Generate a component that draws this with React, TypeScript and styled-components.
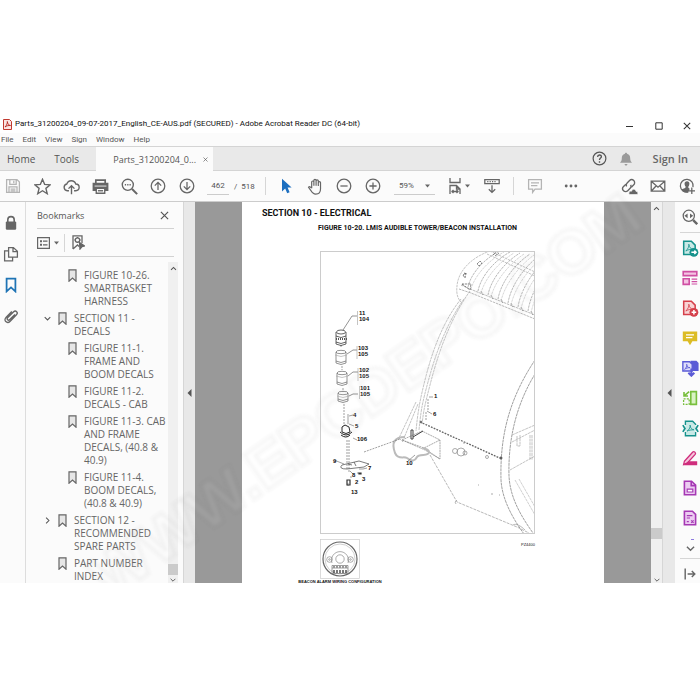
import React from "react";
import styled, { createGlobalStyle } from "styled-components";

const Global = createGlobalStyle`
  * { box-sizing: border-box; }
  body { margin: 0; background: #fff; font-family: "Open Sans", "Noto Sans", sans-serif; color: #555; }
  button, input, select { font: inherit; color: inherit; }
`;

const smallFont = `Roboto, "Liberation Sans", sans-serif`;

const Window = styled.main`
  position: relative;
  display: flex;
  flex-direction: column;
  height: calc(100vh - 232px);
  min-height: 360px;
  margin: 115px 0 117px;
  overflow: hidden;
  background: #fbfbfb;
`;

const TitleBar = styled.header`
  display: flex;
  align-items: center;
  height: 18px;
  padding-left: 3px;
  gap: 3px;
  background: #fff;
`;
const Title = styled.h1`
  flex: 1;
  margin: 0;
  font-family: ${smallFont};
  font-size: 8px;
  line-height: 16px;
  font-weight: 400;
  color: #111;
  white-space: nowrap;
`;
const PlainButton = styled.button`
  display: inline-flex;
  align-items: center;
  justify-content: center;
  padding: 0;
  border: 0;
  background: none;
  flex: none;
`;
const WindowButton = styled(PlainButton)`
  width: 30px;
  height: 16px;
  color: #333;
  &:last-child { width: 26px; }
`;

const MenuBar = styled.nav`
  display: flex;
  align-items: center;
  height: 13px;
  padding-left: 1px;
  gap: 9px;
  font-family: ${smallFont};
  font-size: 8px;
`;
const MenuItem = styled(PlainButton)`
  line-height: 13px;
`;

const TabBar = styled.nav`
  display: flex;
  align-items: stretch;
  height: 25px;
  border-top: 1px solid #d4d4d4;
  border-bottom: 1px solid #d4d4d4;
  background: #e9e9e9;
  font-size: 10px;
`;
const Tab = styled(PlainButton)<{ $wide?: boolean }>`
  padding-left: ${(p) => (p.$wide ? 19 : 7)}px;
`;
const DocumentTab = styled.div`
  display: flex;
  align-items: center;
  justify-content: flex-end;
  gap: 7px;
  width: 117px;
  margin: 0 auto -1px 17px;
  padding-right: 5px;
  background: #fbfbfb;
  font-size: 9px;
`;
const Account = styled.div`
  display: flex;
  align-items: center;
  gap: 12px;
  padding-right: 12px;
`;
const SignIn = styled(PlainButton)`
  margin-left: 8px;
  font-size: 11px;
  font-weight: 600;
  color: #666;
`;

const ToolBar = styled.div`
  display: flex;
  align-items: center;
  flex: none;
  height: 31px;
  border-bottom: 1px solid #ccc;
  font-family: ${smallFont};
  font-size: 8px;
`;
const ToolGroup = styled.div<{ $end?: boolean; $gap?: number }>`
  display: flex;
  align-items: center;
  gap: ${(p) => p.$gap ?? 3}px;
  flex: none;
  margin-left: ${(p) => (p.$end ? "auto" : "0")};
`;
const Tool = styled(PlainButton)<{ $faint?: boolean }>`
  width: 26px;
  height: 28px;
  color: ${(p) => (p.$faint ? "#b4b4b4" : "#666")};
`;
const Rule = styled.span<{ $left: number; $right: number }>`
  width: 1px;
  height: 18px;
  flex: none;
  margin: 0 ${(p) => p.$right}px 0 ${(p) => p.$left}px;
  background: #d6d6d6;
`;
const PageField = styled.label`
  display: flex;
  align-items: center;
  gap: 5px;
  width: 46px;
  margin-left: 7px;
  white-space: pre;
`;
const PageInput = styled.input`
  width: 22px;
  height: 18px;
  padding: 0;
  border: 0;
  border-bottom: 1px solid #ccc;
  background: none;
  text-align: center;
`;
const ZoomField = styled.label`
  display: flex;
  align-items: center;
  width: 41px;
  height: 18px;
  margin: 0 11px 0 8px;
  padding-right: 5px;
  border-bottom: 1px solid #ccc;
`;
const ZoomSelect = styled.select`
  flex: 1;
  min-width: 0;
  padding: 0 0 0 5px;
  border: 0;
  background: none;
  appearance: none;
`;

const Workspace = styled.div`
  display: flex;
  flex: 1;
  min-height: 0;
`;
const LeftRail = styled.nav`
  display: flex;
  flex-direction: column;
  align-items: center;
  flex: none;
  gap: 7px;
  width: 26px;
  padding: 9px 4px 0 0;
  border-right: 1px solid #ddd;
`;
const RailButton = styled(PlainButton)<{ $tone?: string }>`
  width: 22px;
  height: 24px;
  color: ${(p) => p.$tone || "#666"};
`;
const Panel = styled.aside`
  display: flex;
  flex-direction: column;
  width: 157px;
  flex: none;
  padding-left: 11px;
  min-height: 0;
`;
const PanelHead = styled.div`
  display: flex;
  align-items: center;
  justify-content: space-between;
  flex: none;
  height: 27px;
  margin-right: 9px;
  padding-right: 5px;
  border-bottom: 1px solid #d2d2d2;
`;
const PanelTitle = styled.h2`
  margin: 0;
  font-size: 9px;
  font-weight: 400;
`;
const PanelTools = styled.div`
  display: flex;
  align-items: center;
  flex: none;
  height: 28px;
  margin-right: 9px;
  border-bottom: 1px solid #d2d2d2;
  color: #666;
`;
const OptionsButton = styled(PlainButton)`
  gap: 4px;
`;
const PanelBody = styled.div`
  display: flex;
  flex: 1;
  min-height: 0;
  padding: 5px 5px 0 0;
`;
const Tree = styled.ul`
  flex: 1;
  margin: 0;
  padding: 7px 0 0;
  overflow: hidden;
  list-style: none;
`;
const TreeItem = styled.li<{ $level: number }>`
  display: flex;
  align-items: flex-start;
  gap: 7px;
  margin-bottom: 4px;
  padding-left: ${(p) => (p.$level ? 31 : 7)}px;
`;
const TreeLink = styled.a`
  font-size: 10px;
  line-height: 13px;
  white-space: pre-line;
  color: #666;
  text-decoration: none;
`;
const Twisty = styled.span`
  display: flex;
  width: 7px;
  height: 13px;
  align-items: center;
`;

const Track = styled.div<{ $bordered?: boolean }>`
  display: flex;
  flex-direction: column;
  align-items: center;
  justify-content: space-between;
  flex: none;
  width: ${(p) => (p.$bordered ? 11 : 10)}px;
  padding: 3px 0 0;
  background: #f0f0f0;
  color: #555;
`;
const ThumbGroup = styled.div<{ $after: number }>`
  display: flex;
  flex-direction: column;
  flex: 1;
  width: 100%;
  justify-content: flex-end;
  padding-bottom: ${(p) => p.$after}px;
`;
const Thumb = styled.div`
  height: 11px;
  background: #cbcbcb;
`;
const Splitter = styled(PlainButton)<{ $edge?: boolean }>`
  width: ${(p) => (p.$edge ? 13 : 12)}px;
  border-left: 1px solid #d6d6d6;
  background: #e8e8e8;
  color: #555;
`;

const Viewer = styled.section`
  display: flex;
  flex: 1;
  justify-content: center;
  min-width: 0;
  overflow: hidden;
  background: #999;
`;
const Sheet = styled.article`
  display: flex;
  flex-direction: column;
  flex: 0 0 362px;
  padding: 5px 20px 0;
  background: #fff;
  color: #111;
  font-family: "Liberation Sans", Arial, sans-serif;
`;
const SectionTitle = styled.h3`
  margin: 0;
  font-family: ${smallFont};
  font-size: 9px;
  line-height: 12px;
  font-weight: 700;
`;
const FigureTitle = styled.h4`
  margin: 4px 0 0 56px;
  font-family: ${smallFont};
  font-size: 7px;
  line-height: 10px;
  font-weight: 700;
  white-space: nowrap;
`;
const Figure = styled.figure`
  display: flex;
  flex-direction: column;
  width: 215px;
  margin: 18px 0 0 58px;
`;
const FigureCode = styled.figcaption`
  height: 6px;
  margin-top: 8px;
  font-size: 4px;
  line-height: 6px;
  text-align: right;
`;
const WiringFigure = styled.figure`
  display: flex;
  flex-direction: column;
  align-items: center;
  width: 156px;
  margin: -9px 0 0;
`;
const WiringCaption = styled.figcaption`
  font-size: 4px;
  line-height: 5px;
  font-weight: 700;
  white-space: nowrap;
`;

const RightRail = styled.nav`
  display: flex;
  flex-direction: column;
  align-items: center;
  flex: none;
  width: 25px;
  padding: 0 0 0 5px;
`;
const RightTool = styled(PlainButton)`
  width: 20px;
  height: 30px;
  color: #666;
`;
const MoreTools = styled(RightTool)`
  flex-direction: column;
  justify-content: flex-end;
  gap: 4px;
  height: 25px;
  padding-bottom: 5px;
`;
const NextToolHint = styled.span`
  width: 3px;
  height: 1px;
  margin-left: 4px;
  background: #8d7be0;
`;
const RailLine = styled.span`
  width: 20px;
  height: 1px;
  flex: none;
  background: #d6d6d6;
`;

const Watermark = styled.svg`
  position: absolute;
  inset: 0;
  pointer-events: none;
`;

type IconProps = { size?: number; children: React.ReactNode; w?: number };
const Icon = ({ size = 16, children, w = 1.6 }: IconProps) => (
  <svg width={size} height={size} viewBox="0 0 20 20" fill="none" stroke="currentColor" strokeWidth={w} aria-hidden="true">
    {children}
  </svg>
);

const SaveIcon = () => (
  <Icon><path d="M2 2h13l3 3v13H2zM6 2v6h8V2M5 18v-7h10v7M7 14h6M7 16h6M11 3.500v3" /></Icon>
);
const StarIcon = () => (
  <Icon size={17}><path d="M10 1.500l2.500 6 6.500.5-5 4.200 1.600 6.300L10 15l-5.600 3.500L6 12.200 1 8l6.500-.5z" /></Icon>
);
const CloudIcon = () => (
  <Icon size={17}><path d="M7 15H5a4 4 0 0 1-.5-7.900A5.500 5.500 0 0 1 15 7a4 4 0 0 1 0 8h-2M10 19V9.500M6.500 12.500L10 9l3.500 3.500" /></Icon>
);
const PrintIcon = () => (
  <Icon size={17}>
    <path d="M4.500 6V2.500h11V6" strokeWidth="2" />
    <path d="M1.500 6.500h17v8h-17z" fill="currentColor" />
    <path d="M5 12h10v6H5z" fill="#fbfbfb" />
    <path d="M7 15h6" />
    <path d="M3 9.500h14" stroke="#fbfbfb" strokeWidth="1" />
  </Icon>
);
const SearchIcon = () => (
  <Icon size={17}><circle cx="8" cy="8" r="6.500" /><path d="M13 13l6 6" strokeWidth="2.400" /><path d="M4.500 8h1.500M7.300 8h1.500M10 8h1.500" /></Icon>
);
const CircleArrow = ({ down }: { down?: boolean }) => (
  <Icon><circle cx="10" cy="10" r="8.500" /><path d={down ? "M10 5v9M6 10.500l4 4 4-4" : "M10 15V6M6 9.500l4-4 4 4"} /></Icon>
);
const CircleSign = ({ plus }: { plus?: boolean }) => (
  <Icon><circle cx="10" cy="10" r="8.500" /><path d={plus ? "M5.500 10h9M10 5.500v9" : "M5.500 10h9"} /></Icon>
);
const CursorIcon = () => (
  <Icon><path d="M5 1v16l4-4 2.500 6 3-1.200-2.500-5.800H17z" fill="#1c6fc0" stroke="none" /></Icon>
);
const HandIcon = () => (
  <Icon size={17} w={1.4}><path d="M5.500 12V4.800a1.300 1.300 0 0 1 2.600 0V9 3a1.300 1.300 0 0 1 2.600 0v6-5.500a1.300 1.300 0 0 1 2.600 0V9.500 5.500a1.300 1.300 0 0 1 2.600 0V13c0 4-2 6-5.500 6-3 0-4.500-1.500-6-4.500L1.800 11c.8-1.200 2-1 3.700 1" /></Icon>
);
const FitIcon = () => (
  <svg width="12" height="16" viewBox="0 0 12 16" fill="none" stroke="currentColor" strokeWidth="1.300" aria-hidden="true">
    <path d="M1 0v4.500h10V0M1 16V7.500h6.500L11 11v5M7.500 7.500V11H11M2.500 13.500h7M4.500 12L3 13.500 4.500 15M7.500 12L9 13.500 7.500 15" />
  </svg>
);
const RulerIcon = () => (
  <Icon size={16}><path d="M1 2h18v5H1z" /><path d="M4 4.500h12" strokeDasharray="1.500 1.500" /><path d="M10 9v9M6 14l4 4 4-4" /></Icon>
);
const CommentIcon = () => (
  <Icon><path d="M2 2h16v12h-8l-3 4v-4H2zM5 6h10M5 9.500h8" /></Icon>
);
const DotsIcon = () => (
  <Icon><g fill="currentColor" stroke="none"><circle cx="4" cy="10" r="1.800" /><circle cx="10" cy="10" r="1.800" /><circle cx="16" cy="10" r="1.800" /></g></Icon>
);
const LinkIcon = () => (
  <Icon size={17} w={1.6}>
    <g transform="rotate(-45 9 9)">
      <path d="M8 5.500H4a3.500 3.500 0 0 0 0 7h4a3.500 3.500 0 0 0 3.300-2.500" />
      <path d="M10 12.500h4a3.500 3.500 0 0 0 0-7h-4A3.500 3.500 0 0 0 6.700 8" />
    </g>
    <path d="M9.500 19.500c-1-3 1-4.500 3-4 .5-3 4.500-3 5 0 2.500 0 3 3 1.500 4z" fill="currentColor" stroke="#fbfbfb" strokeWidth=".8" />
  </Icon>
);
const MailIcon = () => (
  <Icon><path d="M1.500 4h17v12.500h-17zM1.500 4l8.500 7.500L18.500 4M1.500 16.500l6.300-6.800M18.500 16.500l-6.300-6.800" /></Icon>
);
const UserIcon = () => (
  <Icon size={16}>
    <path d="M17.500 11.500A8 8 0 1 0 11.500 17.500" />
    <path d="M10 4c4 0 3.500 5 1.500 7 0 1.500 1 2 2 2.500l-2 4.500C7 18.500 4 17 3 14.500c1-1 5.500-1.500 5.500-3.500C6.500 9 6 4 10 4z" fill="currentColor" stroke="none" />
    <path d="M16 12v8M12 16h8" />
  </Icon>
);
const Caret = () => (
  <svg width="5" height="4" viewBox="0 0 5 4" aria-hidden="true"><path d="M0 .5h5L2.500 3.500z" fill="#666" /></svg>
);
const Chevron = ({ dir, size = 7 }: { dir: "up" | "down" | "right"; size?: number }) => {
  const d = { up: "M3 14l7-7 7 7", down: "M2 6l8 8 8-8", right: "M6 2l8 8-8 8" }[dir];
  return <Icon size={size} w={3}><path d={d} /></Icon>;
};
const LeftArrow = () => (
  <svg width="5" height="8" viewBox="0 0 5 8" aria-hidden="true"><path d="M4.500 0v8L.5 4z" fill="currentColor" /></svg>
);
const CloseIcon = ({ size }: { size: number }) => (
  <Icon size={size} w={2.6}><path d="M2 2l16 16M18 2L2 18" /></Icon>
);
const LockIcon = () => (
  <Icon><path d="M6 9V6a4 4 0 0 1 8 0v3" strokeWidth="2" /><rect x="3.500" y="8" width="13" height="10.500" rx="1.500" fill="currentColor" stroke="none" /></Icon>
);
const PagesIcon = () => (
  <Icon><path d="M7 2h6l5 4.500V14H7zM12.500 2v5H18M7 6H2v12.500h10V14" /></Icon>
);
const RibbonIcon = () => (
  <Icon w={2.2}><path d="M4.500 2h11v16L10 13l-5.500 5z" /></Icon>
);
const ClipIcon = () => (
  <Icon w={1.7}><path d="M15 8l-6.500 6.500c-2 2-4.500-.5-2.500-2.500l7-7c3-3 6.500.7 3.800 3.500L9 16.500c-4 4-9-1-5-5L11 4.500" /></Icon>
);
const BookmarkMark = () => (
  <svg width="9" height="13" viewBox="0 0 9 13" fill="#e6e6e6" stroke="#666" strokeWidth="1.200" aria-hidden="true">
    <path d="M1 .800h7v11.400L4.500 9 1 12.200z" />
  </svg>
);
const OptionsIcon = () => (
  <svg width="13" height="12" viewBox="0 0 13 12" fill="none" stroke="currentColor" strokeWidth="1.200" aria-hidden="true">
    <path d="M.6.600h11.800v10.800H.6zM6 4.200h4.500M6 7.800h4.500" /><path d="M3 4.200h2M3 7.800h2" strokeWidth="2" />
  </svg>
);
const FindMarkIcon = () => (
  <svg width="13" height="15" viewBox="0 0 13 15" fill="none" stroke="currentColor" strokeWidth="1.300" aria-hidden="true">
    <path d="M1 14V.8h9V8M1 14l4.500-4L7 11.500" /><circle cx="5.500" cy="5" r="2.200" /><path d="M5.500 2v1M5.500 7v1M2.500 5h1M7.500 5h1" /><path d="M7.500 7.500l5 3.500-2.500.5-2 2.500z" fill="currentColor" />
  </svg>
);
const PdfLogo = () => (
  <svg width="9" height="11" viewBox="0 0 9 11" aria-hidden="true">
    <path d="M.5.500h6l2 2v8h-8z" fill="#fbe3e1" stroke="#c0392f" />
    <path d="M2 8c2-2 2.500-4 2.300-5.500C4.500 5 6 6.300 7.500 6.500 5.500 6.300 3.500 6.800 2 8z" fill="none" stroke="#b3261e" strokeWidth=".9" />
  </svg>
);
const FitZoom = () => (
  <Icon><circle cx="8.500" cy="8.500" r="7" /><path d="M14 14l5 5" strokeWidth="3" /><path d="M7 5.500v6l-4-3zM10 5.500v6l4-3z" fill="currentColor" stroke="none" /></Icon>
);
const PdfBadge = ({ color, fill, sign }: { color: string; fill: string; sign: string }) => (
  <Icon size={17} w={1.8}>
    <g stroke={color}>
      <path d="M2 1.500h9l4.500 4.500v11H2z" fill={fill} />
      <path d="M4.500 13c3-3 4-6 3.500-8 .5 4 2.500 5.500 5 6-3-.5-6 .5-8.500 2z" strokeWidth="1" />
    </g>
    <circle cx="14" cy="14.500" r="5.200" fill={color} stroke="none" />
    <path d={sign} stroke="#fff" />
  </Icon>
);
const rightTools: { label: string; icon: React.ReactNode }[] = [
  { label: "Export PDF", icon: <PdfBadge color="#16928c" fill="#c9e9e6" sign="M11 14.500h5M14.500 12.500l2 2-2 2" /> },
  { label: "Edit PDF", icon: <Icon><g stroke="#cf4fa3" strokeWidth="2"><path d="M1.500 2h17v5h-17z" fill="#f4c3e2" /><path d="M1.500 11h7.500v7H1.500z" fill="#f4c3e2" /><path d="M12 11.500h7M12 14.500h7M12 17.500h7" strokeWidth="1.500" /></g></Icon> },
  { label: "Create PDF", icon: <PdfBadge color="#d5404b" fill="#f8d3d4" sign="M11.300 14.500h5.400M14 11.800v5.400" /> },
  { label: "Comment", icon: <Icon><path d="M1 2h18v12h-6l-3 5-3-5H1z" fill="#dcbc25" stroke="none" /><path d="M5 6h10M5 9.500h8" stroke="#fff" /></Icon> },
  { label: "Combine Files", icon: <Icon size={17}><path d="M10 1h7l2.500 2.500V13H10z" fill="#5b5bd6" stroke="none" /><g stroke="#5b5bd6"><path d="M1 2h8l3 3v8H1z" fill="#dedcfa" /><path d="M3 11c2-1.500 3-4 2.500-6C6 8 7 9 9.500 9 7 9 5 9.500 3 11z" strokeWidth="1" /><path d="M11 10v8M7.500 15l3.500 3.500 3.500-3.500" strokeWidth="2.400" /></g></Icon> },
  { label: "Organize Pages", icon: <Icon><g stroke="#78bf3c" strokeWidth="2"><path d="M11 2h7v16h-7z" fill="#d9f2c3" /><path d="M2 11h7v7H2z" strokeDasharray="2.500 1.500" strokeWidth="1.600" /><path d="M9 2L3 7M2.500 2.500v5h5" /></g></Icon> },
  { label: "Compress PDF", icon: <Icon size={17}><g stroke="#16928c"><path d="M4 6V1.500h8.500L16 5v1M4 14v4.500h12V14" fill="#c9e9e6" /><path d="M4 6h12v8H4z" fill="#c9e9e6" stroke="none" /><path d="M1 6l2.500 4L1 14M19 6l-2.500 4 2.500 4" strokeWidth="2" /><path d="M6 13c3-2 4-5 3.500-7 .5 4 2 5 4.500 5.500-3 0-6 .5-8 1.500z" strokeWidth="1" /></g></Icon> },
  { label: "Fill & Sign", icon: <Icon><path d="M3 14L13.500 2.500c1.500-1.500 4.500 1 3 3L6.500 16.500 2 18z" fill="#f6c5dc" stroke="#cf2d7c" /><path d="M8 14h11v5H1.500z" fill="#cf2d7c" stroke="none" /></Icon> },
  { label: "Protect", icon: <Icon><g stroke="#a538b4" strokeWidth="2"><path d="M3 1.500h9l5 5V18.500H3z" fill="#eccbf1" /><path d="M11.500 2v5H17" /><path d="M6.500 11.500h7v3.500h-7z" fill="#fff" strokeWidth="1.500" /></g></Icon> },
  { label: "Prepare Form", icon: <Icon><g stroke="#a538b4" strokeWidth="2"><path d="M3 1.500h10l4 4V18.500H3z" fill="#eccbf1" /><path d="M6 7h7M6 10h4" strokeWidth="1.500" /><path d="M6 14.500h2.500M11.500 13l3 3M14.500 13l-3 3" strokeWidth="1.500" /></g></Icon> },
];

const bookmarks = [
  { text: "FIGURE 10-26.\nSMARTBASKET\nHARNESS", level: 1 },
  { text: "SECTION 11 -\nDECALS", level: 0, dir: "down" as const },
  { text: "FIGURE 11-1.\nFRAME AND\nBOOM DECALS", level: 1 },
  { text: "FIGURE 11-2.\nDECALS - CAB", level: 1 },
  { text: "FIGURE 11-3. CAB\nAND FRAME\nDECALS, (40.8 &\n40.9)", level: 1 },
  { text: "FIGURE 11-4.\nBOOM DECALS,\n(40.8 & 40.9)", level: 1 },
  { text: "SECTION 12 -\nRECOMMENDED\nSPARE PARTS", level: 0, dir: "right" as const },
  { text: "PART NUMBER\nINDEX", level: 0 },
];

const callouts: [number, number, string][] = [
  [359, 315, "11"], [359, 321, "104"],
  [358, 350, "103"], [358, 356, "105"],
  [359, 372, "102"], [359, 378, "105"],
  [360, 390, "101"], [360, 396, "105"],
  [353, 417, "4"], [355, 428, "5"], [357, 441, "106"],
  [333, 463, "9"], [368, 470, "7"], [352, 477, "8"], [355, 484, "2"], [362, 481, "3"], [351, 494, "13"],
  [434, 398, "1"], [433, 416, "6"], [406, 465, "10"],
];

const Cylinder = ({ x, y, h }: { x: number; y: number; h: number }) => (
  <g>
    <path d={`M${x - 5} ${y}v${h}q5 3 10 0v-${h}M${x - 5} ${y + h - 2}q5 3 10 0`} />
    <ellipse cx={x} cy={y} rx="5" ry="1.700" />
    <path d={`M${x - 6} ${y + 3}q6 3 12 0`} stroke="#aaa" />
  </g>
);

const slats = [0, 1, 2, 3, 4, 5, 6, 7];

const MachineDrawing = () => (
  <svg width="215" height="283" viewBox="320 251 215 283" fill="none" stroke="#999" strokeWidth=".7" role="img" aria-label="LMIS audible tower and beacon installation">
    <g stroke="#aaa" strokeDasharray="2.500 .8">
      <path d="M490 251C470 258 458 272 457 286c-1 8 1 13 4 16" />
      <path d="M487 254l48 22M490 251l45 21" />
      <path d="M461 285l9 4 65 26M459 289l12 4 64 26" stroke="#999" />
      {slats.map((i) => (
        <g key={i}>
          <path d={`M${468 + i * 10} ${287 + i * 4}C${471 + i * 10} ${273 + i * 3} ${485 + i * 10} ${258 + i * 2} ${500 + i * 10} ${251 + i}`} stroke="#999" />
          <path d={`M${471 + i * 10} ${289 + i * 4}C${475 + i * 10} ${275 + i * 3} ${489 + i * 10} ${260 + i * 2} ${504 + i * 10} ${252 + i}`} stroke="#c4c4c4" />
          <path d={`M${481 + i * 10} ${291 + i * 4}l2 4`} stroke="#777" />
        </g>
      ))}
      <path d="M477 264l3-3 2 2-3 3zM493 255l4-4M463 275l2 3 1-5zM462 284l8 6 1-6zM464 273l3 1M495 256l4-3" stroke="#555" />
    </g>
    <g stroke="#aaa" strokeDasharray="3 .6">
      <path d="M461 299C440 325 430 360 425 380S418 410 416 431" />
      <path d="M464 299C444 327 434 360 428 382S421 410 419 430" />
      <path d="M470 291C448 322 437 358 430 385S424 410 422 424" />
      <path d="M416 402l-17 36 4 4M418 404l-14 34" />
      <path d="M535 360C507 402 500 440 501 480c1 18 10 36 23 54" stroke="#777" />
      <path d="M535 374C516 405 508 440 509 476c1 19 9 36 24 57" stroke="#777" />
      <path d="M512 435l23-10M512 442l23-12M517 436v10h3v-11M510 470l25-14M530 435v25M532 435v25" />
      <path d="M515 480l20 35M519 479l16 28" stroke="#bbb" />
    </g>
    <path d="M420 422l82 37" stroke="#666" strokeWidth="1.300" strokeDasharray="1.800 1.200" />
    <path d="M430 455l27 47 60 25 12 6" stroke="#999" strokeDasharray="3 1" />
    <path d="M513 525c3-2 8 1 12 5M457 500l-2 2 1 2" />
    <g stroke="#888">
      <path d="M402 440l20-9 18 9v19l-15-9zM440 440l-16 8-22-8M425 449l15 10" strokeDasharray="2 .6" />
      <path d="M405 437c-10 0-14 5-10 16 3 7 9 3 12 5 5 4 8 3 10-1s12 0 12-5c0-3-4-3-6-4" stroke="#bbb" strokeWidth="2" />
      <path d="M411 430v9h2v-9zM413 437l10-6" stroke="#444" strokeWidth="1" />
      <circle cx="455" cy="451" r="2.500" /><circle cx="461" cy="452" r="4" /><circle cx="465" cy="453" r="2" />
      <circle cx="487" cy="457" r="1.500" /><path d="M478 485h1M491 494h2M499 495h1M463 443h2" />
      <circle cx="421" cy="422" r="1" fill="#333" /><circle cx="501" cy="458" r="1.200" fill="#333" />
    </g>
    <path d="M364 452l36-13M341 345v2M342 366v4M343 388v4M344 404v22M347 440v30M349 440v32M428 399v11M426 412v8" stroke="#777" strokeDasharray="2 1" />
    <g stroke="#666">
      <Cylinder x={341} y={352} h={11} />
      <Cylinder x={342} y={373} h={11} />
      <Cylinder x={343} y={393} h={8} />
      <ellipse cx="341" cy="332" rx="4.500" ry="2" stroke="#222" />
      <path d="M336 332v12q5 3 10 0v-12M336 336q5 3 10 0M336 342q5 3 10 0" stroke="#222" />
      <path d="M336 339h11" stroke="#555" strokeWidth="2" strokeDasharray="1 1" />
      <path d="M343 330l9-14h5M347 354l6-4h4M348 376l5-4h5M349 396l4-2h5" />
      <path d="M357.500 311v14M357 346v13M358 368v13M359.500 386v13" stroke="#aaa" />
    </g>
    <path d="M342 427l3-2 4 2 1 5q-4 3-8 0zM340 432q6 6 12 0M341 435q5 4 9 0" stroke="#222" strokeWidth="1" />
    <path d="M342 465l17-4 10 3-5 3-17 2q-9 0-5-4zM354 462l2 4M348 464l4 1" stroke="#444" />
    <path d="M334 460l10 4M350 471h0l3 3M359 469h4l4-1M357 473h2M350 477h2M348 483v3M353 438l4 2M348 414v10M349 424l5 2M349 416l4-1M408 461l7-6M429 397h4M427 411l5 3" stroke="#777" />
    <path d="M347 480h3v5h-3zM359 473h2v1h-2z" stroke="#333" strokeWidth="1.200" />
    <g fill="#111" stroke="none" fontFamily="Liberation Sans, Arial, sans-serif" fontSize="6" fontWeight="700">
      {callouts.map(([x, y, t]) => <text key={`${x}-${y}`} x={x} y={y}>{t}</text>)}
    </g>
    <rect x="320.500" y="251.500" width="214" height="282" stroke="#ccc" strokeWidth="1" />
  </svg>
);

const WiringDrawing = () => (
  <svg width="40" height="40" viewBox="0 0 40 40" fill="none" stroke="#888" strokeWidth=".7" role="img" aria-label="Beacon alarm connector">
    <rect x=".5" y=".5" width="39" height="39" stroke="#ccc" />
    <circle cx="20" cy="20" r="17" stroke="#666" strokeWidth="1.200" />
    <circle cx="20" cy="20" r="15" stroke="#bbb" />
    <path d="M12 24a8.500 8.500 0 1 1 16 0" />
    <circle cx="20" cy="20" r="4.200" /><circle cx="9.500" cy="20.500" r="2.800" /><circle cx="30.500" cy="20.500" r="2.800" />
    <circle cx="9.500" cy="20.500" r=".8" /><circle cx="30.500" cy="20.500" r=".8" />
    <path d="M12 26.500h16v8H12zM12 29h16" stroke="#777" />
    <path d="M13 28h14" strokeWidth="2" stroke="#999" strokeDasharray="2 1" />
    <path d="M14 31v3M17 31v3M20 31v3M23 31v3M26 31v3" stroke="#222" strokeWidth="1.200" />
  </svg>
);

export default function App() {
  return (
    <>
      <Global />
      <Window>
        <TitleBar>
          <PdfLogo />
          <Title>Parts_31200204_09-07-2017_English_CE-AUS.pdf (SECURED) - Adobe Acrobat Reader DC (64-bit)</Title>
          <div>
            <WindowButton aria-label="Minimize"><Icon size={7} w={3}><path d="M0 10h20" /></Icon></WindowButton>
            <WindowButton aria-label="Maximize"><Icon size={8} w={2.5}><path d="M2 2h16v16H2z" /></Icon></WindowButton>
            <WindowButton aria-label="Close"><CloseIcon size={8} /></WindowButton>
          </div>
        </TitleBar>
        <MenuBar>
          {["File", "Edit", "View", "Sign", "Window", "Help"].map((m) => <MenuItem key={m}>{m}</MenuItem>)}
        </MenuBar>
        <TabBar>
          <Tab>Home</Tab>
          <Tab $wide>Tools</Tab>
          <DocumentTab>
            <span>Parts_31200204_0...</span>
            <PlainButton aria-label="Close tab"><CloseIcon size={5} /></PlainButton>
          </DocumentTab>
          <Account>
            <PlainButton aria-label="Help">
              <Icon size={15}><circle cx="10" cy="10" r="8.500" /><path d="M7.500 8c0-3.500 5-3.500 5-.5 0 2-2.500 2-2.500 4.500M10 13.500v2" strokeWidth="1.800" /></Icon>
            </PlainButton>
            <PlainButton aria-label="Notifications">
              <Icon size={14}><path d="M10 1c1 0 1.500.7 1.500 1.600C15 3.500 16 6 16 9c0 3.500 1 4.500 2.500 6.500h-17C3 13.500 4 12.500 4 9c0-3 1-5.500 4.500-6.400C8.500 1.700 9 1 10 1zM8 17h4c0 3-4 3-4 0z" fill="#9a9a9a" stroke="none" /></Icon>
            </PlainButton>
            <SignIn>Sign In</SignIn>
          </Account>
        </TabBar>
        <ToolBar>
          <ToolGroup>
            <Tool $faint aria-label="Save"><SaveIcon /></Tool>
            <Tool aria-label="Star"><StarIcon /></Tool>
            <Tool aria-label="Upload"><CloudIcon /></Tool>
            <Tool aria-label="Print"><PrintIcon /></Tool>
            <Tool aria-label="Find"><SearchIcon /></Tool>
            <Tool aria-label="Previous page"><CircleArrow /></Tool>
            <Tool aria-label="Next page"><CircleArrow down /></Tool>
          </ToolGroup>
          <PageField><PageInput aria-label="Page" defaultValue="462" />/  518</PageField>
          <Rule $left={12} $right={7} />
          <ToolGroup>
            <Tool aria-label="Select"><CursorIcon /></Tool>
            <Tool aria-label="Pan"><HandIcon /></Tool>
            <Tool aria-label="Zoom out"><CircleSign /></Tool>
            <Tool aria-label="Zoom in"><CircleSign plus /></Tool>
          </ToolGroup>
          <ZoomField>
            <ZoomSelect aria-label="Zoom level" defaultValue="59%"><option>59%</option><option>100%</option></ZoomSelect>
            <Caret />
          </ZoomField>
          <ToolGroup $gap={7}>
            <OptionsButton as={Tool} aria-label="Fit page"><FitIcon /><Caret /></OptionsButton>
            <Tool aria-label="Read mode"><RulerIcon /></Tool>
          </ToolGroup>
          <Rule $left={8} $right={8} />
          <ToolGroup $gap={10}>
            <Tool $faint aria-label="Add comment"><CommentIcon /></Tool>
            <Tool aria-label="More tools"><DotsIcon /></Tool>
          </ToolGroup>
          <ToolGroup $end>
            <Tool aria-label="Share link"><LinkIcon /></Tool>
            <Tool aria-label="Send by email"><MailIcon /></Tool>
            <Tool aria-label="Share with people"><UserIcon /></Tool>
          </ToolGroup>
        </ToolBar>
        <Workspace>
          <LeftRail>
            <RailButton aria-label="Security"><LockIcon /></RailButton>
            <RailButton aria-label="Pages"><PagesIcon /></RailButton>
            <RailButton aria-label="Bookmarks" $tone="#1f74b5"><RibbonIcon /></RailButton>
            <RailButton aria-label="Attachments"><ClipIcon /></RailButton>
          </LeftRail>
          <Panel>
            <PanelHead>
              <PanelTitle>Bookmarks</PanelTitle>
              <PlainButton aria-label="Close panel"><CloseIcon size={9} /></PlainButton>
            </PanelHead>
            <PanelTools>
              <OptionsButton aria-label="Options"><OptionsIcon /><Caret /></OptionsButton>
              <Rule $left={5} $right={7} />
              <PlainButton aria-label="Find current bookmark"><FindMarkIcon /></PlainButton>
            </PanelTools>
            <PanelBody>
              <Tree>
                {bookmarks.map((b) => (
                  <TreeItem key={b.text} $level={b.level}>
                    {b.level === 0 && <Twisty>{b.dir && <Chevron dir={b.dir} size={9} />}</Twisty>}
                    <BookmarkMark />
                    <TreeLink href="#">{b.text}</TreeLink>
                  </TreeItem>
                ))}
              </Tree>
              <Track>
                <Chevron dir="up" />
                <ThumbGroup $after={2}><Thumb /></ThumbGroup>
                <Chevron dir="down" size={6} />
              </Track>
            </PanelBody>
          </Panel>
          <Splitter aria-label="Collapse bookmarks"><LeftArrow /></Splitter>
          <Viewer>
            <Sheet>
              <SectionTitle>SECTION 10 - ELECTRICAL</SectionTitle>
              <FigureTitle>FIGURE 10-20. LMIS AUDIBLE TOWER/BEACON INSTALLATION</FigureTitle>
              <Figure>
                <MachineDrawing />
                <FigureCode>PZ4400</FigureCode>
              </Figure>
              <WiringFigure>
                <WiringDrawing />
                <WiringCaption>BEACON ALARM WIRING CONFIGURATION</WiringCaption>
              </WiringFigure>
            </Sheet>
          </Viewer>
          <Track $bordered>
            <Chevron dir="up" />
            <ThumbGroup $after={38}><Thumb /></ThumbGroup>
            <Chevron dir="down" size={6} />
          </Track>
          <Splitter $edge aria-label="Collapse tools"><LeftArrow /></Splitter>
          <RightRail>
            <RightTool aria-label="Search tools"><FitZoom /></RightTool>
            <RailLine />
            {rightTools.map((t) => <RightTool key={t.label} aria-label={t.label}>{t.icon}</RightTool>)}
            <MoreTools aria-label="More"><NextToolHint /><Chevron dir="down" size={9} /></MoreTools>
            <RailLine />
            <RightTool aria-label="Open pane"><Icon size={12} w={2.4}><path d="M2 1v18M6 10h12M13 5l5 5-5 5" /></Icon></RightTool>
          </RightRail>
        </Workspace>
        <Watermark width="100%" height="100%" viewBox="0 115 700 468" preserveAspectRatio="xMidYMid slice" aria-hidden="true">
          <defs><filter id="soft"><feGaussianBlur stdDeviation="1.500" /></filter></defs>
          <g transform="rotate(-35 365 395)" fontFamily="Liberation Sans, Arial, sans-serif" fontSize="62" fontWeight="700" textAnchor="middle">
            <text x="365" y="417" fill="#fff" fillOpacity=".06" stroke="#000" strokeOpacity=".04" strokeWidth="4" filter="url(#soft)">WWW.EPCDEPO.COM</text>
          </g>
        </Watermark>
      </Window>
    </>
  );
}
